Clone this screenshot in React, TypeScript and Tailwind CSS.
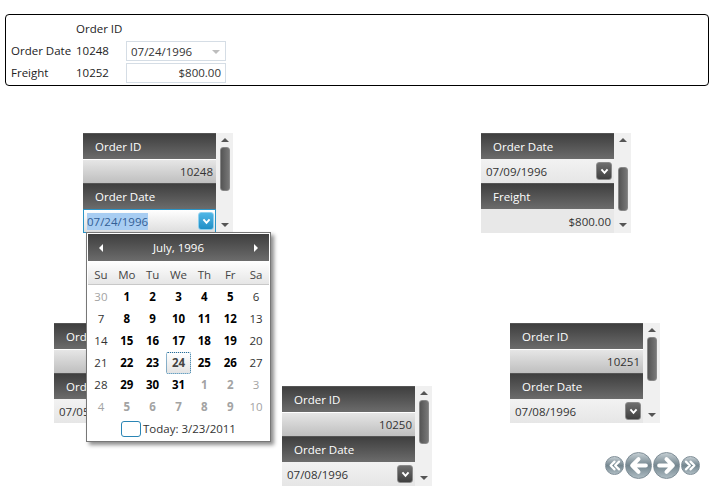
import React from 'react';

const font = "font-['Open_Sans','Noto_Sans',sans-serif]";

const ChevronBox: React.FC<{ active?: boolean }> = ({ active }) => (
    <span className={`flex items-center justify-center w-[16px] h-[18px] rounded-[3px] border ${active ? 'bg-gradient-to-b from-[#4fb6e6] to-[#1f8fc6] border-[#8fd0ee]' : 'bg-gradient-to-b from-[#6f6f6f] to-[#404040] border-[#8a8a8a]'}`}>
        <svg viewBox="0 0 10 8" className="w-[9px] h-[7px]" fill="none" stroke="white" strokeWidth="2.2">
            <polyline points="1.5,1.5 5,5.5 8.5,1.5" />
        </svg>
    </span>
);

const FieldHeader: React.FC<{ label: string }> = ({ label }) => (
    <div className="flex items-center h-[26px] pl-[12px] pt-[1px] text-white text-[11.5px] bg-gradient-to-b from-[#3f3f3f] to-[#6c6c6c] border-t border-[#555]">
        {label}
    </div>
);

const ValueRow: React.FC<{ value: string }> = ({ value }) => (
    <div className="flex items-center justify-end h-[24px] pr-[3px] pt-[1px] text-[11.5px] text-[#333] bg-gradient-to-b from-[#e6e6e6] to-[#bfbfbf] border-t border-white">
        {value}
    </div>
);

const PlainValueRow: React.FC<{ value: string }> = ({ value }) => (
    <div className="flex items-center justify-end h-[24px] pr-[3px] pt-[1px] text-[11.5px] text-[#333] bg-[#e8e8e8]">
        {value}
    </div>
);

const DateRow: React.FC<{ value: string }> = ({ value }) => (
    <div className="flex items-center justify-between h-[24px] pl-[5px] pr-[2px] text-[11.5px] text-[#333] bg-gradient-to-b from-[#f2f2f2] to-[#e6e6e6]">
        <span className="pt-[1px]">{value}</span>
        <ChevronBox />
    </div>
);

const ActiveDateRow: React.FC<{ value: string }> = ({ value }) => (
    <div className="flex items-center justify-between h-[24px] pl-[3px] pr-[1px] text-[11.5px] bg-gradient-to-b from-white to-[#dedede] border border-[#2a93c5]">
        <span className="mt-[1px] bg-[#a8cdf2] text-[#335f96]">{value}</span>
        <ChevronBox active />
    </div>
);

const Scrollbar: React.FC<{ spacer: number; thumb: number }> = ({ spacer, thumb }) => (
    <div className="flex flex-col items-center w-[17px] bg-[#f0f0f0]">
        <div className="w-0 h-0 mt-[5px] border-x-[4px] border-x-transparent border-b-[4px] border-b-[#555]" />
        <div className="shrink-0" style={{ height: spacer }} />
        <div className="w-[10px] rounded-[3px] bg-gradient-to-r from-[#555] to-[#777] border border-[#888]" style={{ height: thumb }} />
        <div className="flex-1" />
        <div className="w-0 h-0 mb-[6px] border-x-[4px] border-x-transparent border-t-[4px] border-t-[#555]" />
    </div>
);

const Card: React.FC<{ className: string; children: React.ReactNode; spacer?: number; thumb?: number }> = ({ className, children, spacer = 8, thumb = 44 }) => (
    <div className={`absolute flex w-[150px] h-[100px] ${className}`}>
        <div className="w-[133px] flex flex-col overflow-hidden">{children}</div>
        <Scrollbar spacer={spacer} thumb={thumb} />
    </div>
);

const weekDays = ['Su', 'Mo', 'Tu', 'We', 'Th', 'Fr', 'Sa'];

type DayKind = 'off' | 'offBold' | 'bold' | 'normal' | 'sel';

const days: { d: number; kind: DayKind }[] = [
    { d: 30, kind: 'off' }, { d: 1, kind: 'bold' }, { d: 2, kind: 'bold' }, { d: 3, kind: 'bold' }, { d: 4, kind: 'bold' }, { d: 5, kind: 'bold' }, { d: 6, kind: 'normal' },
    { d: 7, kind: 'normal' }, { d: 8, kind: 'bold' }, { d: 9, kind: 'bold' }, { d: 10, kind: 'bold' }, { d: 11, kind: 'bold' }, { d: 12, kind: 'bold' }, { d: 13, kind: 'normal' },
    { d: 14, kind: 'normal' }, { d: 15, kind: 'bold' }, { d: 16, kind: 'bold' }, { d: 17, kind: 'bold' }, { d: 18, kind: 'bold' }, { d: 19, kind: 'bold' }, { d: 20, kind: 'normal' },
    { d: 21, kind: 'normal' }, { d: 22, kind: 'bold' }, { d: 23, kind: 'bold' }, { d: 24, kind: 'sel' }, { d: 25, kind: 'bold' }, { d: 26, kind: 'bold' }, { d: 27, kind: 'normal' },
    { d: 28, kind: 'normal' }, { d: 29, kind: 'bold' }, { d: 30, kind: 'bold' }, { d: 31, kind: 'bold' }, { d: 1, kind: 'offBold' }, { d: 2, kind: 'offBold' }, { d: 3, kind: 'off' },
    { d: 4, kind: 'off' }, { d: 5, kind: 'offBold' }, { d: 6, kind: 'offBold' }, { d: 7, kind: 'offBold' }, { d: 8, kind: 'offBold' }, { d: 9, kind: 'offBold' }, { d: 10, kind: 'off' },
];

const dayClass = {
    off: 'text-[#a3a3a3]',
    offBold: 'font-bold text-[#a3a3a3]',
    bold: 'font-bold text-black',
    normal: 'text-[#333]',
    sel: 'font-bold text-[#444] bg-gradient-to-b from-white to-[#e4e4e4] border border-dotted border-[#1f6f9f] rounded-[2px]',
};

const Calendar = () => (
    <div className="absolute left-[86px] top-[232px] w-[185px] h-[210px] bg-white border border-[#777] shadow-[3px_3px_4px_rgba(0,0,0,0.45)] p-px flex flex-col">
        <div className="flex items-center justify-between h-[27px] px-[11px] text-white text-[11.5px] bg-gradient-to-b from-[#3f3f3f] to-[#6c6c6c]">
            <span className="w-0 h-0 border-y-[4px] border-y-transparent border-r-[4px] border-r-white" />
            <span>July, 1996</span>
            <span className="w-0 h-0 border-y-[4px] border-y-transparent border-l-[4px] border-l-white" />
        </div>
        <div className="grid grid-cols-7 h-[24px] pt-[5px] items-center text-center text-[11.5px] text-[#444] bg-gradient-to-b from-white to-[#e6e6e6] border-b border-[#c8c8c8]">
            {weekDays.map((w) => <span key={w}>{w}</span>)}
        </div>
        <div className="grid grid-cols-7 auto-rows-[22px] pt-[1px] text-center text-[11.5px]">
            {days.map((item, i) => (
                <div key={i} className="flex items-center justify-center">
                    <span className={`flex items-center justify-center ${item.kind === 'sel' ? 'w-[26px] h-[22px]' : ''} ${dayClass[item.kind]}`}>{item.d}</span>
                </div>
            ))}
        </div>
        <div className="flex items-center justify-center gap-[2px] flex-1 text-[11.5px] text-[#333]">
            <span className="w-[20px] h-[16px] rounded-[3px] border border-[#2a85b5] bg-white" />
            Today: 3/23/2011
        </div>
    </div>
);

const NavButton: React.FC<{ size: 'sm' | 'lg'; kind: 'first' | 'prev' | 'next' | 'last' }> = ({ size, kind }) => (
    <span className={`flex items-center justify-center rounded-full border border-[#7f8e97] bg-gradient-to-b from-[#c4ced3] via-[#74868f] to-[#aebcc3] ${size === 'lg' ? 'w-[27px] h-[27px]' : 'w-[19px] h-[19px]'}`}>
        <svg viewBox="0 0 20 20" className={size === 'lg' ? 'w-[21px] h-[21px]' : 'w-[13px] h-[13px]'} fill="none" stroke="white" strokeWidth={size === 'lg' ? 3.8 : 3.4} strokeLinecap="round" strokeLinejoin="round">
            {kind === 'prev' && <path d="M17 10H4M10 4l-6 6 6 6" />}
            {kind === 'next' && <path d="M3 10h13M10 4l6 6-6 6" />}
            {kind === 'first' && <path d="M10 4l-6 6 6 6M17 4l-6 6 6 6" />}
            {kind === 'last' && <path d="M3 4l6 6-6 6M10 4l6 6-6 6" />}
        </svg>
    </span>
);

const App: React.FC = () => (
    <div className={`relative w-[715px] h-[500px] bg-white overflow-hidden text-[11.5px] ${font}`}>
        <div className="pt-[14px] px-[5px]">
            <div className="w-[704px] h-[72px] border border-black rounded-[4px] pt-[3px] pl-[5px]">
                <div className="grid grid-cols-[65px_50px_100px] auto-rows-[22px] items-center text-[#222]">
                    <span />
                    <span>Order ID</span>
                    <span />
                    <span>Order Date</span>
                    <span>10248</span>
                    <span className="flex items-center justify-between h-[20px] pt-[1px] px-[4px] border border-[#d5dde5] text-[#333]">
                        07/24/1996
                        <span className="w-0 h-0 mr-[1px] border-x-[4px] border-x-transparent border-t-[4px] border-t-[#bdbdbd]" />
                    </span>
                    <span>Freight</span>
                    <span>10252</span>
                    <span className="flex items-center justify-end h-[20px] px-[4px] border border-[#d5dde5] text-[#333]">$800.00</span>
                </div>
            </div>
        </div>

        <Card className="left-[83px] top-[133px]" spacer={5} thumb={44}>
            <FieldHeader label="Order ID" />
            <ValueRow value="10248" />
            <FieldHeader label="Order Date" />
            <ActiveDateRow value="07/24/1996" />
        </Card>

        <Card className="left-[481px] top-[133px]" spacer={25} thumb={44}>
            <FieldHeader label="Order Date" />
            <DateRow value="07/09/1996" />
            <FieldHeader label="Freight" />
            <PlainValueRow value="$800.00" />
        </Card>

        <Card className="left-[54px] top-[323px]" spacer={5}>
            <FieldHeader label="Order ID" />
            <ValueRow value="10249" />
            <FieldHeader label="Order Date" />
            <DateRow value="07/05/1996" />
        </Card>

        <Card className="left-[282px] top-[386px]" spacer={5}>
            <FieldHeader label="Order ID" />
            <ValueRow value="10250" />
            <FieldHeader label="Order Date" />
            <DateRow value="07/08/1996" />
        </Card>

        <Card className="left-[510px] top-[323px]" spacer={5}>
            <FieldHeader label="Order ID" />
            <ValueRow value="10251" />
            <FieldHeader label="Order Date" />
            <DateRow value="07/08/1996" />
        </Card>

        <Calendar />

        <div className="absolute left-[605px] top-[452px] flex items-center gap-[1px]">
            <NavButton size="sm" kind="first" />
            <NavButton size="lg" kind="prev" />
            <NavButton size="lg" kind="next" />
            <NavButton size="sm" kind="last" />
        </div>
    </div>
);

export default App;
